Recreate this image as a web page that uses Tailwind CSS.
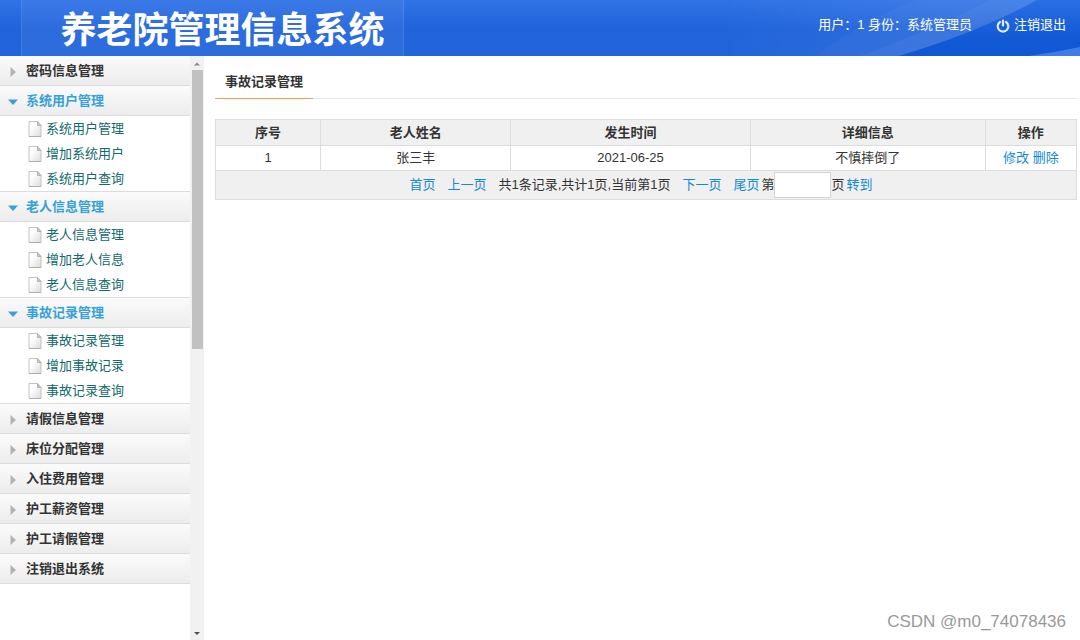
<!DOCTYPE html>
<html lang="zh-CN">
<head>
<meta charset="utf-8">
<meta name="viewport" content="width=device-width, initial-scale=1">
<title>养老院管理信息系统</title>
<script src="https://cdn.jsdelivr.net/npm/@tailwindcss/browser@4"></script>
</head>
<body class="flex h-screen flex-col overflow-hidden bg-white font-['Liberation_Sans','Noto_Sans_CJK_SC',sans-serif] text-[13px] leading-5 text-[#333]">
<svg class="absolute size-0" aria-hidden="true">
  <defs>
    <linearGradient id="paper" x1="0" y1="0" x2="1" y2="1"><stop offset="0.3" stop-color="#fff"/><stop offset="1" stop-color="#dcdcdc"/></linearGradient>
  </defs>
  <symbol id="doc" viewBox="0 0 14 18">
    <path d="M1 1.500h8.500l3.500 4v11H1z" fill="url(#paper)" stroke="#c2c2c2"/>
    <path d="M9.500 1.500v4H13z" fill="#c9c9c9" stroke="#b4b4b4"/>
    <path d="M1 16.500h12" stroke="#adadad"/>
  </symbol>
  <symbol id="closed" viewBox="0 0 10 10"><path d="M2.500 0L8 5l-5.500 5z" fill="#b3b3b3"/></symbol>
  <symbol id="open" viewBox="0 0 10 10"><path d="M0 2.500h10L5 8z" fill="#37a1d8"/></symbol>
</svg>

<header class="relative flex h-14 shrink-0 items-stretch justify-between bg-linear-to-b from-[#3073e6] via-[#2164db] to-[#2264da] pr-3.5 text-white">
  <svg class="absolute inset-y-0 right-0 h-full w-[360px]" viewBox="0 0 360 56" preserveAspectRatio="none" aria-hidden="true">
    <defs>
      <linearGradient id="haze"><stop offset="0" stop-color="#fff" stop-opacity="0"/><stop offset="0.600" stop-color="#fff" stop-opacity="0.060"/></linearGradient>
      <linearGradient id="deep" x1="0" y1="0" x2="0" y2="1"><stop offset="0" stop-color="#2c6ee3"/><stop offset="0.700" stop-color="#1259d6"/><stop offset="1" stop-color="#1157d4"/></linearGradient>
    </defs>
    <path d="M0 0H360V56H0z" fill="url(#haze)"/>
    <path d="M96 56Q140 22 196 0H317Q260 32 179 56z" fill="#fff" fill-opacity="0.030"/>
    <path d="M140 56Q215 28 270 0H317Q260 32 179 56z" fill="#fff" fill-opacity="0.040"/>
    <path d="M179 56Q260 32 317 0H360V56z" fill="url(#deep)"/>
    <path d="M309 56H360V47Q336 52 309 56z" fill="#3f7ce6"/>
  </svg>
  <div class="relative ml-[21px] flex w-[383px] items-center justify-center border-x border-white/10 bg-white/5 pb-0.5 pl-5">
    <h1 class="font-['Noto_Sans_CJK_SC',sans-serif] text-4xl font-bold whitespace-nowrap">养老院管理信息系统</h1>
  </div>
  <div class="relative flex items-center gap-6 pb-1.5">
    <span>用户：1 身份：系统管理员</span>
    <a href="#" class="flex items-center gap-1">
      <svg class="mt-0.5 size-3.5" viewBox="0 0 14 14" fill="none" stroke="#e4edfc" stroke-width="2.200" stroke-linecap="round" aria-hidden="true"><path d="M4 3A5.300 5.300 0 1 0 10 3M7 1.500v5"/></svg>
      注销退出
    </a>
  </div>
</header>

<div class="flex min-h-0 flex-1">
  <aside class="flex w-[204px] shrink-0">
    <nav id="menu" class="min-w-0 flex-1 overflow-hidden"></nav>
    <div class="flex w-3.5 flex-col items-center bg-[#f1f1f1] py-1" aria-hidden="true">
      <svg class="h-2.5 w-2 shrink-0" viewBox="0 0 8 10"><path d="M1 5.500L4 2.500 7 5.500z" fill="#8a8a8a"/></svg>
      <div class="h-[279px] w-[11px] bg-[#c1c1c1]"></div>
      <svg class="mt-auto h-2 w-2 shrink-0" viewBox="0 0 8 8"><path d="M1 4L4 7 7 4z" fill="#505050"/></svg>
    </div>
  </aside>

  <main class="min-w-0 flex-1 pt-3 pr-[3px] pl-[11px]">
    <div class="flex border-b border-[#e6e6e6]">
      <h2 class="-mb-px border-b border-[#ff9c5b] px-2.5 pt-1 pb-1.5 font-bold">事故记录管理</h2>
    </div>
    <table class="mt-5 w-full table-fixed border-collapse border border-[#ddd] text-center">
      <colgroup><col class="w-[12.2%]"><col class="w-[22.1%]"><col class="w-[27.8%]"><col class="w-[27.3%]"><col></colgroup>
      <thead class="bg-[#f0f0f0]">
        <tr class="h-[26px]">
          <th class="border border-[#ddd]">序号</th><th class="border border-[#ddd]">老人姓名</th><th class="border border-[#ddd]">发生时间</th><th class="border border-[#ddd]">详细信息</th><th class="border border-[#ddd]">操作</th>
        </tr>
      </thead>
      <tbody>
        <tr class="h-[25px]">
          <td class="border border-[#ddd]">1</td><td class="border border-[#ddd]">张三丰</td><td class="border border-[#ddd]">2021-06-25</td><td class="border border-[#ddd]">不慎摔倒了</td>
          <td class="border border-[#ddd] text-[#1489d0]"><a href="#">修改</a> <a href="#">删除</a></td>
        </tr>
      </tbody>
      <tfoot class="bg-[#f0f0f0]">
        <tr class="h-[29px]">
          <td colspan="5">
            <div class="flex items-center justify-center pr-2.5">
              <a href="#" class="mr-3 text-[#1489d0]">首页</a>
              <a href="#" class="mr-3 text-[#1489d0]">上一页</a>
              <span class="mr-3">共1条记录,共计1页,当前第1页</span>
              <a href="#" class="mr-3 text-[#1489d0]">下一页</a>
              <a href="#" class="mr-0.5 text-[#1489d0]">尾页</a>
              <label for="page">第</label>
              <input id="page" type="text" class="h-[26px] w-[57px] border border-[#d4d4d4] bg-white px-1">
              <span class="mr-0.5">页</span>
              <button type="button" class="text-[#1489d0]">转到</button>
            </div>
          </td>
        </tr>
      </tfoot>
    </table>
  </main>
</div>

<p class="absolute right-3.5 bottom-1.5 text-[17px] leading-6 text-[#999]">CSDN @m0_74078436</p>

<script>
const sections = [
  ['密码信息管理'],
  ['系统用户管理', '系统用户管理', '增加系统用户', '系统用户查询'],
  ['老人信息管理', '老人信息管理', '增加老人信息', '老人信息查询'],
  ['事故记录管理', '事故记录管理', '增加事故记录', '事故记录查询'],
  ['请假信息管理'], ['床位分配管理'], ['入住费用管理'], ['护工薪资管理'], ['护工请假管理'], ['注销退出系统']
];
document.getElementById('menu').innerHTML = sections.map(([title, ...links]) => {
  const open = links.length > 0;
  return `<button type="button" aria-expanded="${open}" class="flex h-[30px] w-full items-center gap-2 border-b border-[#dcdcdc] bg-linear-to-b from-[#fbfbfb] to-[#ececec] pl-2 font-bold ${open ? 'text-[#37a1d8]' : 'text-[#333]'}">
    <svg class="mt-0.5 size-2.5" aria-hidden="true"><use href="#${open ? 'open' : 'closed'}"/></svg>${title}</button>` +
    (open ? `<ul class="border-b border-[#dcdcdc]">${links.map(t => `<li><a href="#" class="flex h-[25px] items-center gap-1 pl-7 text-[#126a6a]"><svg class="h-[18px] w-3.5" aria-hidden="true"><use href="#doc"/></svg>${t}</a></li>`).join('')}</ul>` : '');
}).join('');
</script>
</body>
</html>
